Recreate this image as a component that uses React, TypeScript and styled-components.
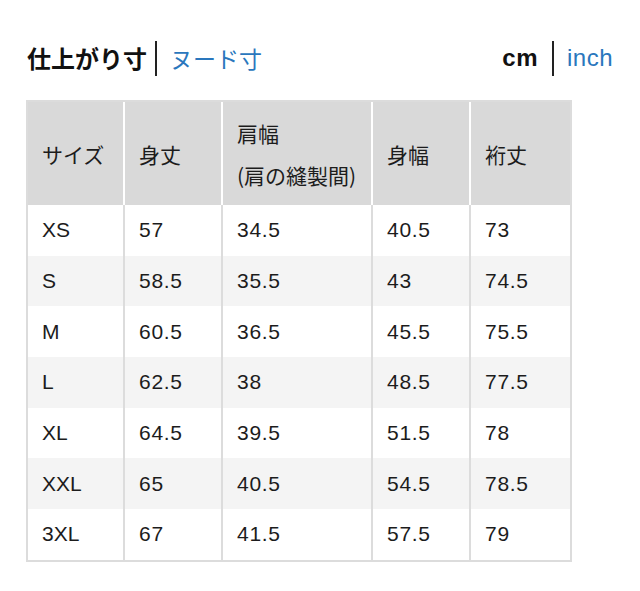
import React from "react";
import styled, { createGlobalStyle } from "styled-components";

const Global = createGlobalStyle`
  html, body { margin: 0; padding: 0; background: #ffffff; }
  body { font-family: "Liberation Sans", "Noto Sans CJK JP", sans-serif; color: #222; }
`;

const Page = styled.div`
  width: 640px;
  height: 591px;
  box-sizing: border-box;
  padding: 40px 26px 0 26px;
  background: #fff;
`;

const TopBar = styled.div`
  display: flex;
  justify-content: space-between;
  align-items: center;
  height: 36px;
  padding: 0 1px;
  margin-bottom: 24px;
`;

const Toggle = styled.div`
  display: flex;
  align-items: center;
`;

const Option = styled.span<{ $active?: boolean; $latin?: boolean }>`
  font-family: ${(p) =>
    p.$latin
      ? `"Liberation Sans", "Noto Sans CJK JP", sans-serif`
      : `"Noto Sans CJK JP", sans-serif`};
  font-size: ${(p) => (p.$latin ? "24px" : p.$active ? "24px" : "23px")};
  line-height: 36px;
  font-weight: ${(p) => (p.$active ? 700 : 400)};
  color: ${(p) => (p.$active ? "#111" : "#2a77bd")};
  letter-spacing: ${(p) => (p.$latin ? "0.5px" : "0")};
`;

const Divider = styled.span<{ $wide?: boolean }>`
  display: block;
  width: 2px;
  height: 35px;
  background: #222;
  margin: ${(p) => (p.$wide ? "0 13px 0 14px" : "0 13px 0 8px")};
`;

const Table = styled.div`
  width: 546px;
  box-sizing: border-box;
  border: 2px solid #dcdcdc;
  display: flex;
  flex-direction: column;
`;

const Row = styled.div<{ $head?: boolean }>`
  display: grid;
  grid-template-columns: 95px 96px 148px 96px 99px;
  column-gap: 2px;
  background: ${(p) => (p.$head ? "#ffffff" : "#dcdcdc")};
  height: ${(p) => (p.$head ? "103px" : "50.7px")};
`;

const Cell = styled.div<{ $bg: string; $num?: boolean }>`
  background: ${(p) => p.$bg};
  display: flex;
  align-items: center;
  padding-left: 14px;
  font-family: "Liberation Sans", "Noto Sans CJK JP", sans-serif;
  font-size: 21px;
  color: #1c1c1c;
  letter-spacing: ${(p) => (p.$num ? "0.7px" : "0")};
`;

const HeadCell = styled.div`
  background: #d9d9d9;
  display: flex;
  flex-direction: column;
  justify-content: center;
  padding-left: 14px;
  font-family: "Noto Sans CJK JP", sans-serif;
  font-size: 21px;
  line-height: 42px;
  color: #1c1c1c;
`;

const headers: string[][] = [
  ["サイズ"],
  ["身丈"],
  ["肩幅", "(肩の縫製間)"],
  ["身幅"],
  ["裄丈"],
];

const rows: string[][] = [
  ["XS", "57", "34.5", "40.5", "73"],
  ["S", "58.5", "35.5", "43", "74.5"],
  ["M", "60.5", "36.5", "45.5", "75.5"],
  ["L", "62.5", "38", "48.5", "77.5"],
  ["XL", "64.5", "39.5", "51.5", "78"],
  ["XXL", "65", "40.5", "54.5", "78.5"],
  ["3XL", "67", "41.5", "57.5", "79"],
];

export default function App() {
  return (
    <>
      <Global />
      <Page>
        <TopBar>
          <Toggle>
            <Option $active>仕上がり寸</Option>
            <Divider />
            <Option>ヌード寸</Option>
          </Toggle>
          <Toggle>
            <Option $active $latin>cm</Option>
            <Divider $wide />
            <Option $latin>inch</Option>
          </Toggle>
        </TopBar>
        <Table>
          <Row $head>
            {headers.map((h, i) => (
              <HeadCell key={i}>
                {h.map((line, j) => (
                  <span key={j}>{line}</span>
                ))}
              </HeadCell>
            ))}
          </Row>
          {rows.map((r, i) => (
            <Row key={i}>
              {r.map((v, j) => (
                <Cell key={j} $bg={i % 2 === 0 ? "#ffffff" : "#f4f4f4"} $num={j > 0}>
                  {v}
                </Cell>
              ))}
            </Row>
          ))}
        </Table>
      </Page>
    </>
  );
}
